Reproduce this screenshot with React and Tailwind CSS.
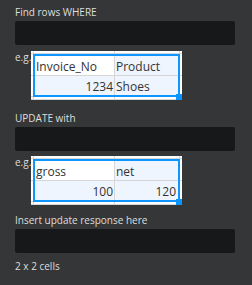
import React from "react";

const font = { fontFamily: '"Open Sans", "Noto Sans", sans-serif' };

function Label({ children, className = "" }) {
  return (
    <div className={`text-[10px] leading-[14px] text-[#dedede] whitespace-nowrap ${className}`}>
      {children}
    </div>
  );
}

function Input({ className = "" }) {
  return <div className={`h-[24px] w-[220px] rounded-[2px] bg-[#17181a] ${className}`} />;
}

function Cell({ children, className = "" }) {
  return (
    <div className={`border-r border-b border-[#d6d6d6] overflow-hidden whitespace-nowrap text-[12px] leading-[16px] text-[#333] ${className}`}>
      {children}
    </div>
  );
}

function Sheet({ a, b, c, d, alignHeadRight = false }) {
  return (
    <div className="relative mt-[1px] h-[49px] w-[151px] overflow-hidden bg-white">
      <div className="grid grid-cols-[3px_81px_65px_3px] grid-rows-[3px_22px_21px_3px]">
        <Cell />
        <Cell />
        <Cell />
        <Cell />
        <Cell />
        <Cell className="bg-white pl-[2px] pt-[5px]">{a}</Cell>
        <Cell className="bg-[#eef5fe] pl-[1px] pt-[5px]">{b}</Cell>
        <Cell />
        <Cell />
        <Cell className="bg-[#eef5fe] pt-[3px] pr-[1px] text-right">{c}</Cell>
        <Cell className={`bg-[#eef5fe] pt-[3px] ${alignHeadRight ? "pr-[3px] text-right" : "pl-[1px]"}`}>{d}</Cell>
        <Cell />
        <Cell />
        <Cell />
        <Cell />
        <Cell />
      </div>
      <div className="absolute left-[2px] top-[3px] h-[43px] w-[147px] border-2 border-[#0d96ff]" />
      <div className="absolute left-[145px] top-[43px] h-[6px] w-[6px] bg-[#0d96ff]" />
    </div>
  );
}

export default function App() {
  return (
    <div className="h-[285px] w-[252px] overflow-hidden bg-[#353637] pl-[15px] pt-[5px]" style={font}>
      <Label>Find rows WHERE</Label>
      <Input className="mt-[2px]" />
      <div className="mt-[5px] flex items-start">
        <Label className="w-[16px]">e.g.</Label>
        <Sheet a="Invoice_No" b="Product" c="1234" d="Shoes" />
      </div>
      <Label className="mt-[11px]">UPDATE with</Label>
      <Input className="mt-[2px]" />
      <div className="mt-[4px] flex items-start">
        <Label className="w-[16px]">e.g.</Label>
        <Sheet a="gross" b="net" c="100" d="120" alignHeadRight />
      </div>
      <Label className="mt-[8px]">Insert update response here</Label>
      <Input className="mt-[2px]" />
      <Label className="mt-[6px]">2 x 2 cells</Label>
    </div>
  );
}
